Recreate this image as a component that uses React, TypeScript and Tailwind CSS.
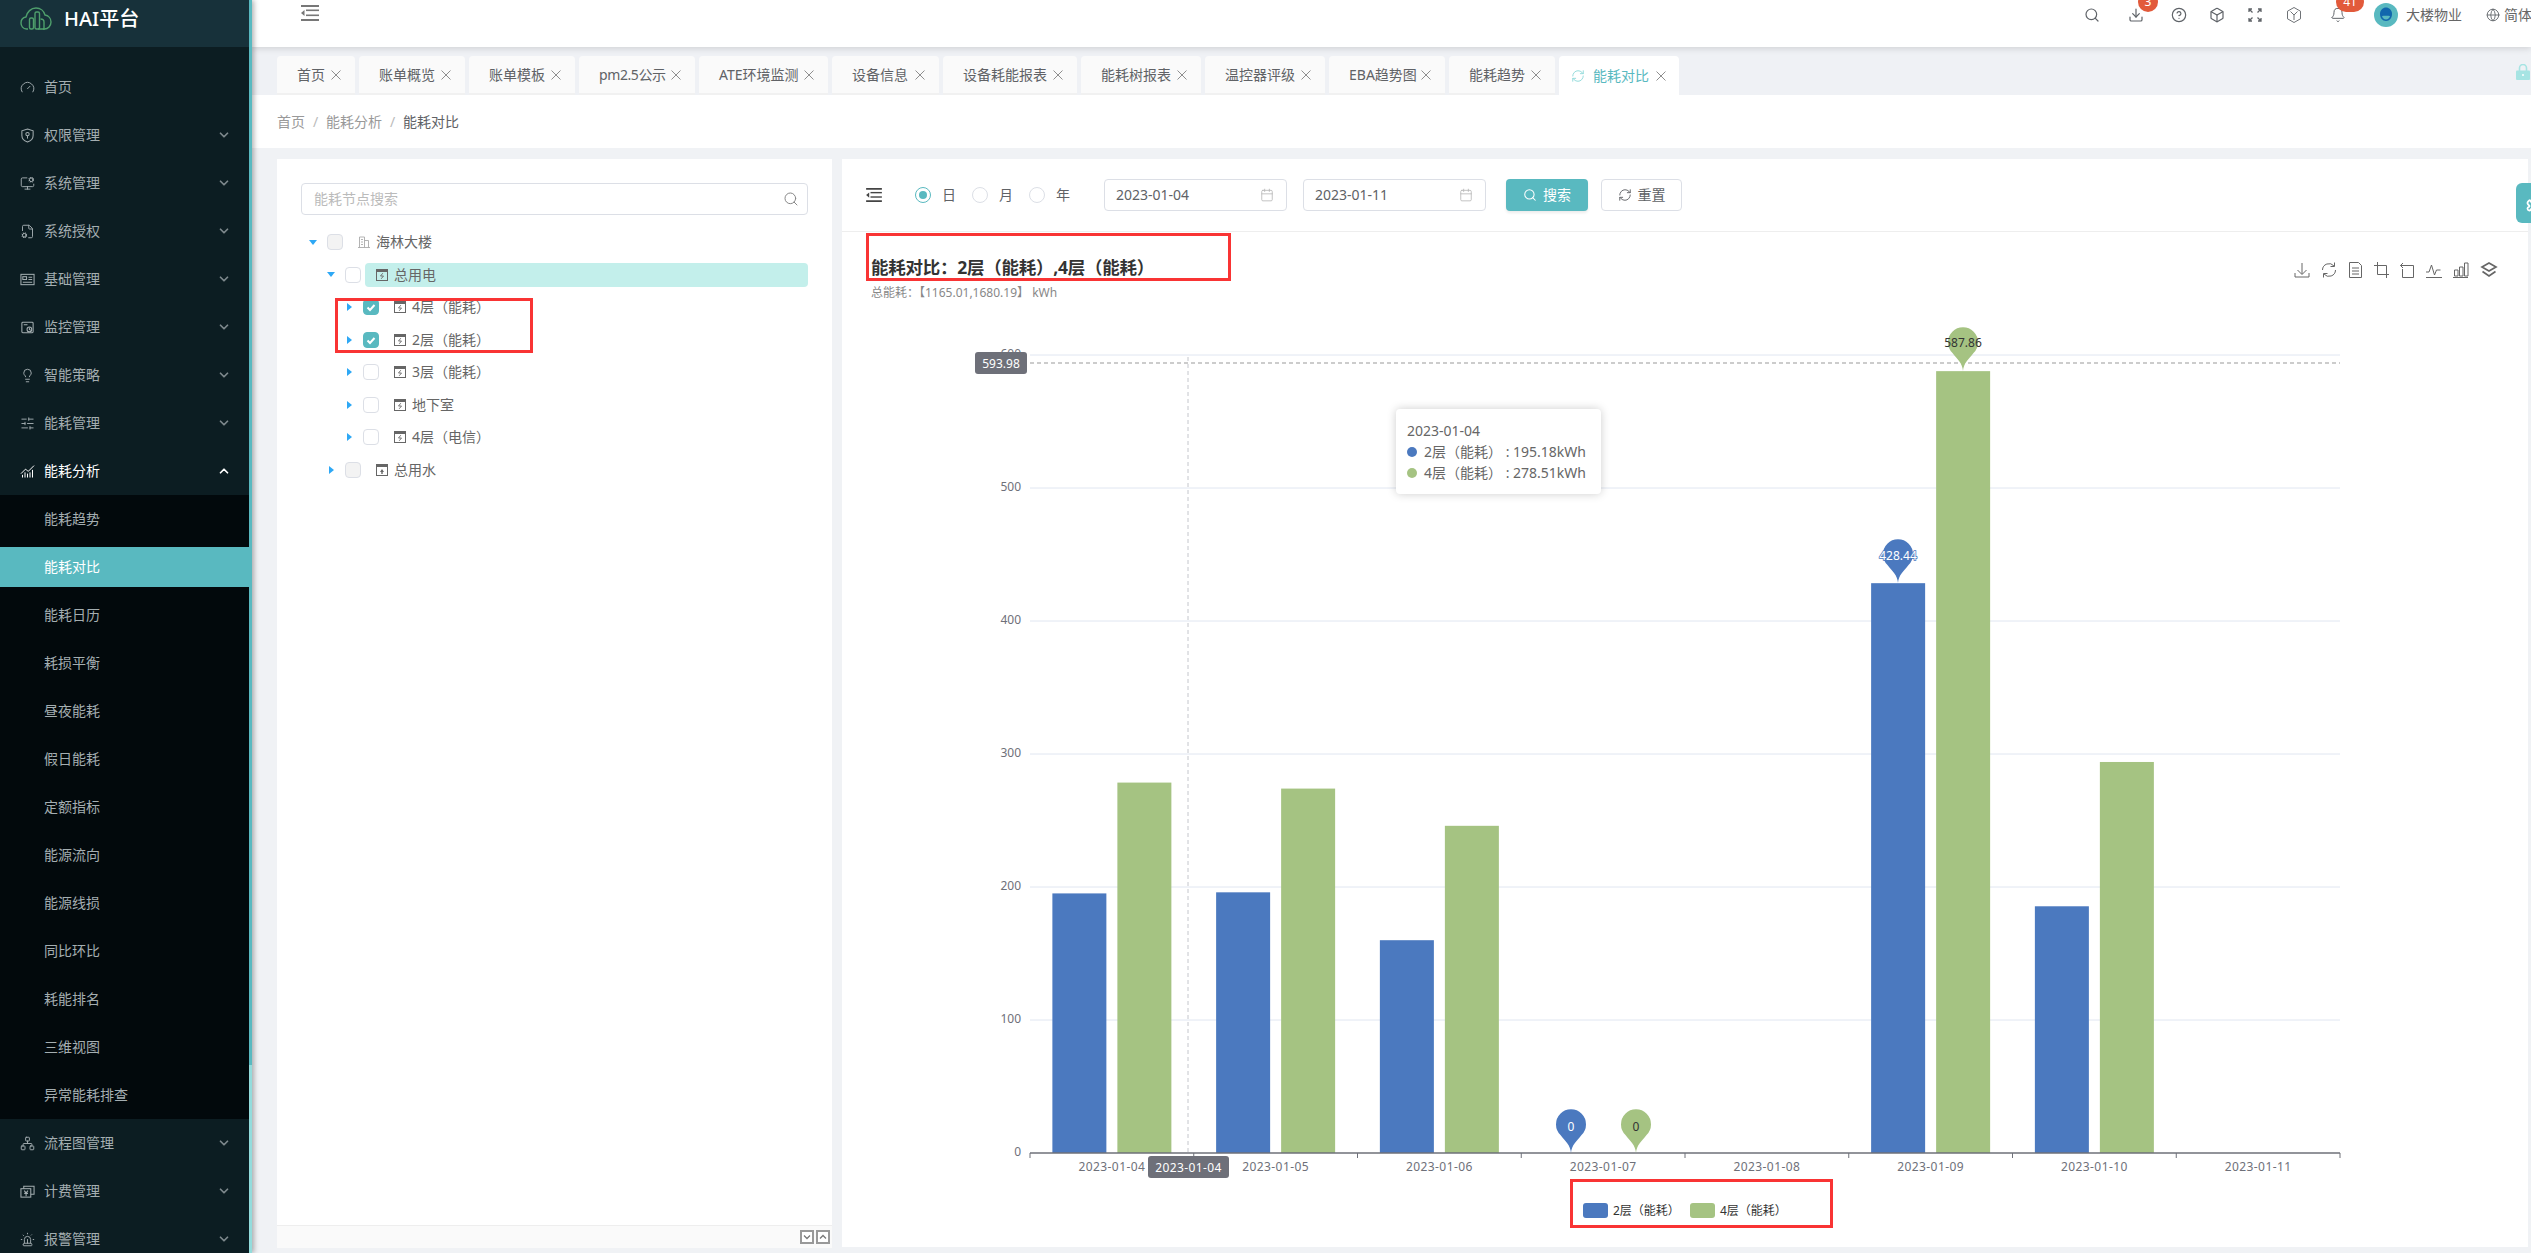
import React from "react";
import {
  Gauge,
  MonitorCog,
  FileCog,
  Lightbulb,
  SlidersHorizontal,
  ChartNoAxesCombined,
  Network,
  Siren,
  ChevronDown,
  ChevronUp,
  Search,
  Download,
  CircleHelp,
  Box,
  Bell,
  Globe,
  Calendar,
  RefreshCw,
  Puzzle,
} from "lucide-react";

const iconCls = "w-[15px] h-[15px] shrink-0";

const ShieldIcon = () => (
  <svg viewBox="0 0 16 16" fill="none" stroke="currentColor" strokeWidth="1.1" className={iconCls}>
    <path d="M8 1l6 2v5c0 3.5-3 6-6 7-3-1-6-3.500-6-7V3z" />
    <circle cx="8" cy="6.500" r="1.800" />
    <path d="M8 8.300v3" />
  </svg>
);
const CardIcon = () => (
  <svg viewBox="0 0 16 16" fill="none" stroke="currentColor" strokeWidth="1.1" className={iconCls}>
    <rect x="1" y="2.500" width="14" height="11" />
    <rect x="3" y="5" width="4" height="3" />
    <path d="M9 5.500h4M9 8h4M3 11h10" />
  </svg>
);
const MonitorIcon = () => (
  <svg viewBox="0 0 16 16" fill="none" stroke="currentColor" strokeWidth="1.1" className={iconCls}>
    <rect x="2" y="2.500" width="12" height="11" rx="1" />
    <circle cx="10" cy="10" r="2.500" />
    <path d="M10 8v2l1.500 1M4 5h4" />
  </svg>
);
const BillIcon = () => (
  <svg viewBox="0 0 16 16" fill="none" stroke="currentColor" strokeWidth="1.1" className={iconCls}>
    <rect x="1" y="5" width="10.500" height="9" />
    <path d="M4 5V2.500h11v8.500h-3.500M4.500 7l2 2.500L8.500 7M4.500 10h4M6.500 9.500V13" />
  </svg>
);

type Menu = { t: string; i: React.ReactNode; c?: boolean; a?: boolean };
const top: Menu[] = [
  { t: "首页", i: <Gauge className={iconCls} strokeWidth={1.5} />, c: false },
  { t: "权限管理", i: <ShieldIcon />, c: true },
  { t: "系统管理", i: <MonitorCog className={iconCls} strokeWidth={1.5} />, c: true },
  { t: "系统授权", i: <FileCog className={iconCls} strokeWidth={1.5} />, c: true },
  { t: "基础管理", i: <CardIcon />, c: true },
  { t: "监控管理", i: <MonitorIcon />, c: true },
  { t: "智能策略", i: <Lightbulb className={iconCls} strokeWidth={1.5} />, c: true },
  { t: "能耗管理", i: <SlidersHorizontal className={iconCls} strokeWidth={1.5} />, c: true },
];
const sub = ["能耗趋势", "能耗对比", "能耗日历", "耗损平衡", "昼夜能耗", "假日能耗", "定额指标", "能源流向", "能源线损", "同比环比", "耗能排名", "三维视图", "异常能耗排查"];
const bottom: Menu[] = [
  { t: "流程图管理", i: <Network className={iconCls} strokeWidth={1.5} />, c: true },
  { t: "计费管理", i: <BillIcon />, c: true },
  { t: "报警管理", i: <Siren className={iconCls} strokeWidth={1.5} />, c: true },
];

function MenuRow({ m, active }: { m: Menu; active?: boolean }) {
  return (
    <div className={"h-12 shrink-0 flex items-center pl-5 pr-[18px] text-sm " + (active ? "text-white" : "text-[#a4aeb1]")}>
      <span className="w-6 flex shrink-0">{m.i}</span>
      <span className="flex-1">{m.t}</span>
      {m.c === true && (active ? <ChevronUp className="w-[14px] h-[14px] text-white" strokeWidth={3} /> : <ChevronDown className="w-[14px] h-[14px] text-[#7d888c]" strokeWidth={3} />)}
    </div>
  );
}

function Sidebar() {
  return (
    <aside className="w-[252px] h-full shrink-0 flex relative z-20 shadow-[2px_0_5px_rgba(0,0,0,0.3)] overflow-hidden">
      <div className="w-[249px] h-full flex flex-col bg-[#0c1d22] overflow-hidden">
        <div className="h-[47px] shrink-0 bg-[#17313a] flex items-center pl-5">
          <svg viewBox="0 0 32 28" className="w-8 h-7 shrink-0 -mt-[10px]" fill="none" stroke="#4f9f6c" strokeWidth="1.400">
            <path d="M8 24H6.500C3 24 1 21 1 18c0-3 2-5.500 5-6C7 7 11 3 16 3c4.500 0 8 3 9 7 3.500.5 6 3.500 6 7 0 4-3 7-6.500 7H23" />
            <rect x="9.500" y="13" width="4" height="11" rx="1.500" />
            <rect x="15" y="7" width="4.500" height="17" rx="1.500" />
            <path d="M20.500 14c2 0 3.500 1 3.500 3v7h-6" />
          </svg>
          <span className="ml-3 text-[20px] font-medium text-white -mt-[10px]">HAI平台</span>
        </div>
        <div className="h-4 shrink-0" />
        {top.map((m) => (
          <MenuRow key={m.t} m={m} />
        ))}
        <MenuRow active m={{ t: "能耗分析", i: <ChartNoAxesCombined className={iconCls} strokeWidth={1.6} />, c: true }} />
        <div className="bg-[#02090c] flex flex-col shrink-0">
          {sub.map((s) =>
            s === "能耗对比" ? (
              <div key={s} className="h-12 flex items-center">
                <div className="h-10 w-full bg-[#59b9c0] text-white text-sm flex items-center pl-11">{s}</div>
              </div>
            ) : (
              <div key={s} className="h-12 text-[#a4aeb1] text-sm flex items-center pl-11">
                {s}
              </div>
            )
          )}
        </div>
        {bottom.map((m) => (
          <MenuRow key={m.t} m={m} />
        ))}
      </div>
      <div className="w-[3px] h-full flex flex-col">
        <div className="h-[1065px] bg-[#59b9c0]" />
        <div className="flex-1 bg-[#93dcdc]" />
      </div>
    </aside>
  );
}

function Outdent({ cls }: { cls: string }) {
  return (
    <svg viewBox="0 0 18 16" className={cls} fill="currentColor">
      <rect x="0" y="0" width="18" height="2" />
      <rect x="5" y="4.500" width="13" height="1.600" />
      <rect x="5" y="9.500" width="13" height="1.600" />
      <rect x="0" y="14" width="18" height="2" />
      <path d="M3.500 5v6L0 8z" />
    </svg>
  );
}

function TopBar() {
  return (
    <header className="h-[47px] shrink-0 bg-white flex items-start pt-[7px] pl-[49px] text-[#5f6368] relative z-10 shadow-[0_2px_6px_rgba(0,0,0,0.12)] overflow-hidden">
      <Outdent cls="w-[18px] h-4 -mt-[2px] text-[#777] shrink-0" />
      <Search className="w-4 h-4 ml-[1765px] shrink-0" strokeWidth={1.8} />
      <div className="relative w-4 h-4 ml-7 shrink-0">
        <Download className="w-4 h-4" strokeWidth={1.8} />
        <div className="absolute left-[10px] -top-[15px] w-5 h-5 rounded-full bg-[#e25a3b] text-white text-xs flex items-center justify-center">3</div>
      </div>
      <CircleHelp className="w-4 h-4 ml-[27px] shrink-0" strokeWidth={1.8} />
      <Box className="w-4 h-4 ml-[22px] shrink-0" strokeWidth={1.8} />
      <svg viewBox="0 0 16 16" className="w-4 h-4 ml-[22px] shrink-0" fill="none" stroke="currentColor" strokeWidth="1.300">
        <path d="M2 5V2h3M11 2h3v3M14 11v3h-3M5 14H2v-3M2.500 2.500l3 3M13.500 2.500l-3 3M13.500 13.500l-3-3M2.500 13.500l3-3" />
      </svg>
      <svg viewBox="0 0 16 16" className="w-4 h-4 ml-[23px] shrink-0" fill="none" stroke="currentColor" strokeWidth="0.900">
        <path d="M8 .5l6.500 3.700v7.600L8 15.500l-6.500-3.700V4.200zM4.500 4.500L8 8l3.500-3.500M8 8v5" />
      </svg>
      <div className="relative w-4 h-4 ml-7 shrink-0">
        <Bell className="w-4 h-4" strokeWidth={1.5} />
        <div className="absolute left-[6px] -top-[15px] w-7 h-5 rounded-full bg-[#e25a3b] text-white text-xs flex items-center justify-center">41</div>
      </div>
      <svg viewBox="0 0 24 24" className="w-6 h-6 ml-7 -mt-1 shrink-0">
        <circle cx="12" cy="12" r="12" fill="#59b9c0" />
        <path d="M6 11c0-4 3-6.500 6-6.500s6 2.500 6 6.500c0 4-2.500 7-6 7s-6-3-6-7z" fill="#1167ad" />
        <path d="M8 13c2-.5 6-.5 8 0-.5 2-2 3.500-4 3.500S8.500 15 8 13z" fill="#59b9c0" />
      </svg>
      <span className="ml-2 text-sm leading-4 text-[#666] shrink-0">大楼物业</span>
      <Globe className="w-[14px] h-[14px] ml-6 mt-px shrink-0" strokeWidth={1.5} />
      <span className="ml-1 text-sm leading-4 text-[#666] shrink-0">简体</span>
    </header>
  );
}

const tabs: [string, string, string][] = [
  ["首页", "w-[78px]", ""],
  ["账单概览", "w-[106px]", ""],
  ["账单模板", "w-[106px]", ""],
  ["pm2.5公示", "w-[116px]", "tracking-[-0.4px]"],
  ["ATE环境监测", "w-[129px]", ""],
  ["设备信息", "w-[107px]", ""],
  ["设备耗能报表", "w-[134px]", ""],
  ["能耗树报表", "w-[120px]", ""],
  ["温控器评级", "w-[120px]", ""],
  ["EBA趋势图", "w-[116px]", ""],
  ["能耗趋势", "w-[106px]", ""],
];

const CloseX = () => (
  <svg viewBox="0 0 10 10" className="w-[10px] h-[10px] shrink-0 text-[#8e8e8e]" fill="none" stroke="currentColor" strokeWidth="1">
    <path d="M.5.500l9 9M9.500.500l-9 9" />
  </svg>
);

function TabBar() {
  return (
    <div className="h-12 shrink-0 bg-[#eff1f5] flex items-end pl-[25px] pr-px gap-1 relative">
      {tabs.map(([t, w, extra]) => (
        <div key={t} className={w + " h-[39px] shrink-0 bg-[#fafafa] border-b-2 border-[#f1f1f1] rounded-t flex items-center justify-between pl-5 pr-[14px] text-sm text-[#606266]"}>
          <span className={extra}>{t}</span>
          <CloseX />
        </div>
      ))}
      <div className="w-[120px] h-[39px] shrink-0 bg-white rounded-t flex items-center pl-3 pr-[13px] text-sm text-[#59b9c0]">
        <RefreshCw className="w-[14px] h-[14px] text-[#8fd9d9] mr-2 shrink-0" strokeWidth={1.6} />
        <span className="flex-1">能耗对比</span>
        <CloseX />
      </div>
      <svg viewBox="0 0 14 16" className="w-[14px] h-4 ml-auto self-center mt-px shrink-0">
        <path d="M3.500 7V4a3.500 3.500 0 0 1 7 0v3" fill="none" stroke="#a6e4e3" strokeWidth="1.600" />
        <rect x="0" y="6.500" width="14" height="9.500" rx="1" fill="#a6e4e3" />
        <circle cx="7" cy="11" r="1" fill="white" />
      </svg>
    </div>
  );
}

function Breadcrumb() {
  return (
    <div className="h-[53px] shrink-0 bg-white flex items-center pl-[25px] text-sm text-[#999]">
      <span>首页</span>
      <span className="mx-2 w-[5px] text-[#bbb]">/</span>
      <span>能耗分析</span>
      <span className="mx-2 w-[5px] text-[#bbb]">/</span>
      <span className="text-[#606266]">能耗对比</span>
    </div>
  );
}

const MeterIcon = ({ water }: { water?: boolean }) => (
  <svg viewBox="0 0 12 12" className="w-3 h-3 shrink-0" fill="none">
    <rect x=".5" y=".5" width="11" height="11" stroke="#666" />
    <rect x="0" y="0" width="12" height="3" fill="#666" />
    {water ? <path d="M6 5l2 3H4z M5.300 8h1.400v2H5.300z" fill="#666" /> : <path d="M6.800 4.200L4.500 7h3L5.200 9.800" stroke="#666" strokeWidth=".9" />}
  </svg>
);
const BuildingIcon = () => (
  <svg viewBox="0 0 12 12" className="w-3 h-3 shrink-0" fill="none" stroke="#aaa" strokeWidth=".9">
    <path d="M0 11.500h12M1.500 11.500V1h5v10.500M6.500 4.500h4v7M3 3.500h2M3 6h2M3 8.500h2" />
  </svg>
);

type Node = { t: string; level: 0 | 1 | 2; open?: boolean; checked?: boolean; disabled?: boolean; hl?: boolean; icon?: "b" | "w" };
const nodes: Node[] = [
  { t: "海林大楼", level: 0, open: true, disabled: true, icon: "b" },
  { t: "总用电", level: 1, open: true, hl: true },
  { t: "4层（能耗）", level: 2, checked: true },
  { t: "2层（能耗）", level: 2, checked: true },
  { t: "3层（能耗）", level: 2 },
  { t: "地下室", level: 2 },
  { t: "4层（电信）", level: 2 },
  { t: "总用水", level: 1, disabled: true, icon: "w" },
];

function TreeRow({ n }: { n: Node }) {
  const indent = n.level === 0 ? "pl-0" : n.level === 1 ? "pl-[18px]" : "pl-9";
  return (
    <div className={"h-[32.5px] flex items-center " + indent}>
      <span className="w-6 flex justify-center shrink-0">
        {n.open ? (
          <span className="w-0 h-0 border-x-4 border-x-transparent border-t-[5px] border-t-[#2ea8f5]" />
        ) : (
          <span className="w-0 h-0 border-y-4 border-y-transparent border-l-[5px] border-l-[#2ea8f5]" />
        )}
      </span>
      <span
        className={
          "ml-0.5 w-4 h-4 rounded-sm shrink-0 flex items-center justify-center border " +
          (n.checked ? "bg-[#59b9c0] border-[#59b9c0]" : n.disabled ? "bg-[#f3f3f3] border-[#dcdfe6]" : "bg-white border-[#dcdfe6]")
        }
      >
        {n.checked && (
          <svg viewBox="0 0 12 12" className="w-3 h-3" fill="none" stroke="white" strokeWidth="2">
            <path d="M2.500 6.500l2.500 2.500 4.500-5" />
          </svg>
        )}
      </span>
      <div className={"ml-1 h-6 flex-1 rounded-sm flex items-center pl-[11px] gap-1.5 text-sm text-[#666] " + (n.hl ? "bg-[#c3efeb]" : "")}>
        {n.icon === "b" ? <BuildingIcon /> : <MeterIcon water={n.icon === "w"} />}
        <span>{n.t}</span>
      </div>
    </div>
  );
}

function LeftPanel() {
  return (
    <section className="w-[555px] h-[1089px] shrink-0 bg-white flex flex-col relative">
      <div className="flex-1 px-6 pt-6 pr-[24px]">
        <div className="h-8 border border-[#dcdfe6] rounded flex items-center pl-3 pr-2 text-sm text-[#bbb]">
          <span className="flex-1">能耗节点搜索</span>
          <Search className="w-4 h-4 text-[#888]" strokeWidth={1.5} />
        </div>
        <div className="mt-[11px]">
          {nodes.map((n) => (
            <TreeRow key={n.t} n={n} />
          ))}
        </div>
      </div>
      <div className="h-[23px] shrink-0 bg-[#fafafa] border-t border-[#eee] flex items-center justify-end gap-0.5 pr-0.5">
        <span className="w-[14px] h-[14px] bg-white border-2 border-[#999] flex items-center justify-center">
          <svg viewBox="0 0 10 10" className="w-2.5 h-2.5 shrink-0" fill="none" stroke="#777" strokeWidth="1.300">
            <path d="M2 3.500L5 6.500 8 3.500" />
          </svg>
        </span>
        <span className="w-[14px] h-[14px] bg-white border-2 border-[#999] flex items-center justify-center">
          <svg viewBox="0 0 10 10" className="w-2.5 h-2.5 shrink-0" fill="none" stroke="#777" strokeWidth="1.300">
            <path d="M2 6.500L5 3.500 8 6.500" />
          </svg>
        </span>
      </div>
      <div className="absolute left-[58px] top-[139px] w-[198px] h-[55px] border-[3px] border-[#f93434]" />
    </section>
  );
}

function Radio({ label, on }: { label: string; on?: boolean }) {
  return (
    <div className="flex items-center text-sm text-[#606266] mr-4">
      <span className={"w-4 h-4 rounded-full border flex items-center justify-center " + (on ? "border-[#59b9c0]" : "border-[#dcdfe6]")}>
        {on && <span className="w-2 h-2 rounded-full bg-[#59b9c0]" />}
      </span>
      <span className="ml-[11px]">{label}</span>
    </div>
  );
}

function DateBox({ v }: { v: string }) {
  return (
    <div className="w-[183px] h-8 shrink-0 border border-[#dcdfe6] rounded flex items-center pl-[11px] pr-3 text-sm text-[#606266]">
      <span className="flex-1">{v}</span>
      <Calendar className="w-[14px] h-[14px] text-[#b5b5b5]" strokeWidth={1.4} />
    </div>
  );
}

function Toolbar() {
  return (
    <div className="h-[73px] shrink-0 border-b border-[#eee] flex items-center pl-6">
      <Outdent cls="w-4 h-[14px] text-[#444] shrink-0 mr-[33px]" />
      <Radio label="日" on />
      <Radio label="月" />
      <Radio label="年" />
      <div className="ml-[18px] flex gap-4">
        <DateBox v="2023-01-04" />
        <DateBox v="2023-01-11" />
      </div>
      <button className="ml-5 w-[82px] h-8 shrink-0 rounded bg-[#59b9c0] text-white text-sm flex items-center justify-center gap-1.5 shadow-[0_2px_3px_rgba(0,0,0,0.08)]">
        <Search className="w-[14px] h-[14px]" strokeWidth={1.8} />
        <span>搜索</span>
      </button>
      <button className="ml-[13px] w-[81px] h-8 shrink-0 rounded border border-[#dcdfe6] text-[#606266] text-sm flex items-center justify-center gap-1.5">
        <RefreshCw className="w-[14px] h-[14px]" strokeWidth={1.6} />
        <span>重置</span>
      </button>
    </div>
  );
}

const BLUE = "#4b79bf";
const GREEN = "#a5c382";
const data: [number, number][] = [
  [195.18, 278.51],
  [196, 274],
  [160, 246],
  [0, 0],
  [0, 0],
  [428.44, 587.86],
  [185.5, 294],
  [0, 0],
];
const cats = ["2023-01-04", "2023-01-05", "2023-01-06", "2023-01-07", "2023-01-08", "2023-01-09", "2023-01-10", "2023-01-11"];
const x0 = 1030;
const step = 163.75;
const y0 = 1153;
const k = 1.33;

function Pin({ cx, tip, color }: { cx: number; tip: number; color: string }) {
  return <path transform={`translate(${cx - 15} ${tip - 44})`} fill={color} d="M15 44C14.500 36 9 32 4.500 26A15 15 0 1 1 25.500 26C21 32 15.500 36 15 44Z" />;
}

function Chart() {
  const tb = "fill-none stroke-[#666] [stroke-width:1]";
  return (
    <svg viewBox="842 232 1686 1015" className="w-[1686px] h-[1015px] block">
      <text x="871" y="274" className="fill-[#333] text-[17.5px] font-bold tracking-[-0.25px]">能耗对比：2层（能耗）,4层（能耗）</text>
      <text x="871" y="297" className="fill-[#888] text-[12px]">总能耗：【1165.01,1680.19】 kWh</text>
      <g transform="translate(2294 262)" className={tb}>
        <path d="M8 1v11M3.500 8L8 12.500 12.500 8M1 11v4h14v-4" />
      </g>
      <g transform="translate(2321 262)" className={tb}>
        <path d="M1.500 8a6.500 6.500 0 0 1 11.500-4M14.500 8a6.500 6.500 0 0 1-11.500 4M13.500 .5v4h-4M2.500 15.500v-4h4" />
      </g>
      <g transform="translate(2348 262)" className={tb}>
        <path d="M1.500 .5h9l3 3v12h-12zM4 6h7M4 9h7M4 12h7" />
      </g>
      <g transform="translate(2374 262)" className={tb}>
        <path d="M3.500 0v12.500H15M0 3.500h12.500V16" />
      </g>
      <g transform="translate(2400 262)" className={tb}>
        <path d="M3 1L.5 3.500 3 6M.5 3.500h13v12h-11V7" />
      </g>
      <g transform="translate(2426 262)" className={tb}>
        <path d="M0 15.500h16M0 10h3l2.500-7 3 10 2-5h4" />
      </g>
      <g transform="translate(2453 262)" className={tb}>
        <path d="M0 15.500h15M1.500 8H5v6H1.500zM6.500 5H10v9H6.500zM11.500 1H15v13h-3.500z" />
      </g>
      <g transform="translate(2481 262)" className="fill-none stroke-[#666] [stroke-width:1.700]">
        <path d="M8 1l7 4-7 4-7-4zM1.500 9.500L8 14l6.500-4.500" />
      </g>

      {[0, 100, 200, 300, 400, 500, 600].map((v) => {
        const y = y0 - v * k;
        return (
          <g key={v}>
            {v > 0 && <line x1={x0} x2="2340" y1={y} y2={y} stroke="#e0e6f1" />}
            <text x="1021" y={y + 3} textAnchor="end" className="fill-[#6e7079] text-[12px]">{v}</text>
          </g>
        );
      })}

      <line x1="1030" x2="2340" y1="363" y2="363" stroke="#999" strokeDasharray="4 3" />
      <line x1="1188" x2="1188" y1="357" y2="1153" stroke="#c4c6cc" strokeDasharray="4 3" />

      {data.map(([a, b], i) => {
        const c = x0 + step * i + step / 2;
        return (
          <g key={i}>
            {a > 0 && <rect x={c - 59.5} width="54" y={y0 - a * k} height={a * k} fill={BLUE} />}
            {b > 0 && <rect x={c + 5.5} width="54" y={y0 - b * k} height={b * k} fill={GREEN} />}
          </g>
        );
      })}

      <line x1="1030" x2="2340" y1="1153" y2="1153" stroke="#6e7079" strokeWidth="1.5" />
      {Array.from({ length: 9 }).map((_, i) => (
        <line key={i} x1={x0 + step * i} x2={x0 + step * i} y1="1153" y2="1158" stroke="#6e7079" />
      ))}
      {cats.map((c, i) => (
        <text key={c} x={x0 + step * i + step / 2} y="1171" textAnchor="middle" className="fill-[#6e7079] text-[12px] tracking-[0.4px]">{c}</text>
      ))}

      <Pin cx={1963} tip={371} color={GREEN} />
      <text x="1963" y="347" textAnchor="middle" className="fill-[#333] text-[12px]">587.86</text>
      <Pin cx={1898} tip={583} color={BLUE} />
      <text x="1898" y="560" textAnchor="middle" stroke={BLUE} strokeWidth="1.500" paintOrder="stroke" className="fill-white text-[12px]">428.44</text>
      <Pin cx={1571} tip={1153} color={BLUE} />
      <text x="1571" y="1130.500" textAnchor="middle" className="fill-white text-[12px]">0</text>
      <Pin cx={1636} tip={1153} color={GREEN} />
      <text x="1636" y="1130.500" textAnchor="middle" className="fill-[#333] text-[12px]">0</text>

      <rect x="975" y="352" width="52" height="22" rx="3" fill="#6e7079" />
      <text x="1001" y="367.500" textAnchor="middle" className="fill-white text-[12px]">593.98</text>
      <rect x="1148" y="1156" width="81" height="22" rx="3" fill="#6e7079" />
      <text x="1188.500" y="1171.500" textAnchor="middle" className="fill-white text-[12px] tracking-[0.4px]">2023-01-04</text>

      <rect x="1583" y="1203" width="25" height="15" rx="3" fill={BLUE} />
      <text x="1613" y="1215" className="fill-[#333] text-[12px]">2层（能耗）</text>
      <rect x="1690" y="1203" width="25" height="15" rx="3" fill={GREEN} />
      <text x="1720" y="1215" className="fill-[#333] text-[12px]">4层（能耗）</text>
    </svg>
  );
}

function RightPanel() {
  return (
    <section className="w-[1686px] h-[1088px] shrink-0 bg-white flex flex-col relative overflow-hidden">
      <Toolbar />
      <Chart />
      <div className="absolute left-[24px] top-[74px] w-[365px] h-12 border-[3px] border-[#f93434]" />
      <div className="absolute left-[728px] top-[1020px] w-[263px] h-[49px] border-[3px] border-[#f93434]" />
      <div className="absolute left-[554px] top-[250px] w-[205px] h-[85px] bg-white rounded shadow-[0_0_10px_rgba(0,0,0,0.2)] pl-[11px] pt-[11px] text-sm text-[#666] leading-[21px]">
        <div>2023-01-04</div>
        <div className="flex items-center">
          <span className="w-2.5 h-2.5 rounded-full bg-[#4b79bf] mr-[7px]" />
          <span className="whitespace-pre">2层（能耗） : 195.18kWh</span>
        </div>
        <div className="flex items-center">
          <span className="w-2.5 h-2.5 rounded-full bg-[#a5c382] mr-[7px]" />
          <span className="whitespace-pre">4层（能耗） : 278.51kWh</span>
        </div>
      </div>
    </section>
  );
}

export default function App() {
  return (
    <div className="w-[2531px] h-[1253px] flex overflow-hidden bg-[#f0f2f5] font-['Noto_Sans','Noto_Sans_CJK_SC',sans-serif]">
      <Sidebar />
      <main className="w-[2279px] h-full flex flex-col relative">
        <TopBar />
        <TabBar />
        <Breadcrumb />
        <div className="flex-1 flex gap-2.5 pl-[25px] pt-[11px]">
          <LeftPanel />
          <RightPanel />
        </div>
        <div className="absolute left-[2264px] top-[183px] w-[15px] h-10 bg-[#59b9c0] rounded-l-md flex items-center pl-[10px] overflow-hidden z-10">
          <Puzzle className="w-[18px] h-[18px] shrink-0 text-white" strokeWidth={2.4} />
        </div>
      </main>
    </div>
  );
}
